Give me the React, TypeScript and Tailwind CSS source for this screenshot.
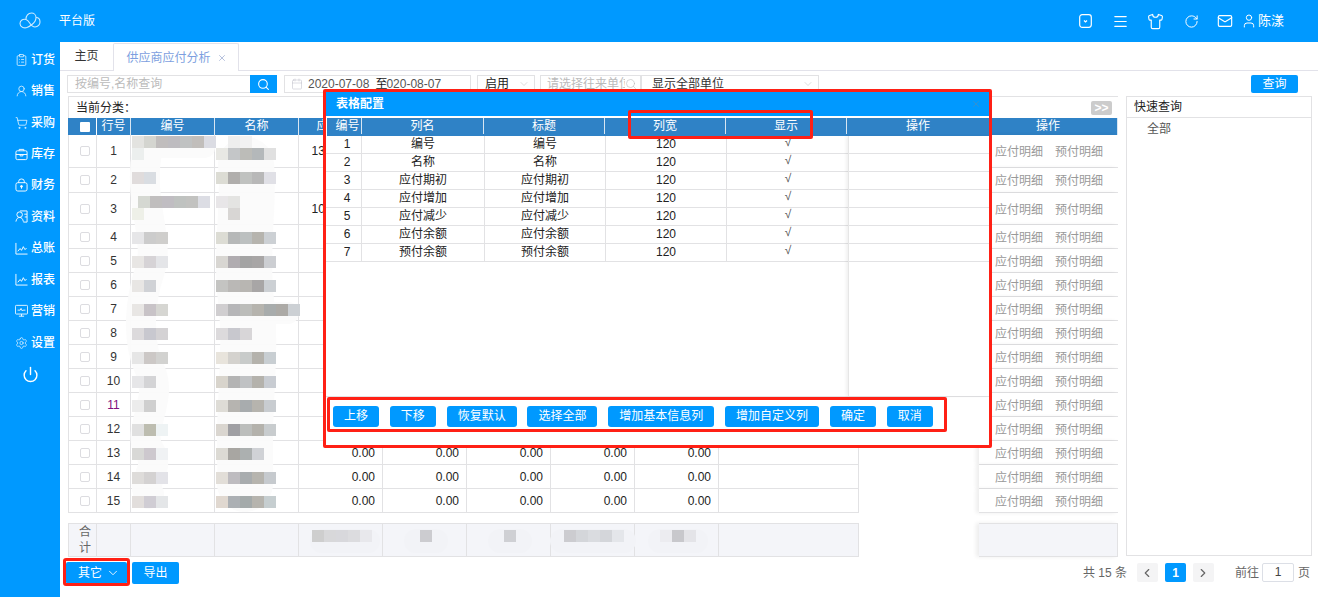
import {
  Calendar,
  ChevronDown,
  ChevronLeft,
  ChevronRight,
  ClipboardList,
  Mail,
  Menu,
  Power,
  RotateCw,
  Search,
  Settings,
  Shirt,
  ShoppingCart,
  User,
  UserRound,
  X,
} from 'lucide-react';

const gridCols = 'grid grid-cols-[29px_34px_84px_84px_84px_84px_84px_84px_84px_140px_120px_139px]';
const line = 'border-[#e2e2e4]';

const ChartIcon = () => (
  <svg width="15" height="15" viewBox="0 0 14 14" fill="none" stroke="currentColor" strokeWidth="1">
    <path d="M1 1v12h12.500" />
    <path d="M3 10l2.500-3 1.500 2 2-4 1.500 3 2-1" />
  </svg>
);

const BoxIcon = () => (
  <svg width="15" height="15" viewBox="0 0 14 14" fill="none" stroke="currentColor" strokeWidth="1">
    <rect x="1" y="3" width="12" height="9.500" rx="1.500" />
    <path d="M4.500 3V1.500h5V3M1 7h12M5.500 7v1.500h3V7" />
  </svg>
);

const BagIcon = () => (
  <svg width="15" height="16" viewBox="0 0 14 15" fill="none" stroke="currentColor" strokeWidth="1">
    <rect x="1" y="5" width="12" height="9" rx="2" />
    <path d="M4 5V3.500a3 2.500 0 0 1 6 0V5" />
    <circle cx="7" cy="9" r="1" fill="currentColor" />
    <path d="M7 9v2.500" />
  </svg>
);

const ContactIcon = () => (
  <svg width="15" height="15" viewBox="0 0 14 14" fill="none" stroke="currentColor" strokeWidth="1">
    <path d="M5.500 1H13v12H9" />
    <circle cx="5" cy="5" r="3" />
    <path d="M1 12.500c.500-3 2-4.500 4-4.500s3.500 1.500 4 4.500M10 4.500h3M10.500 7.500H13" />
  </svg>
);

const MonitorIcon = () => (
  <svg width="16" height="16" viewBox="0 0 15 15" fill="none" stroke="currentColor" strokeWidth="1">
    <rect x="0.500" y="1" width="14" height="10" rx="1" />
    <path d="M3 6.500h3l1-2 1.500 3 1-1h2.500M7.500 11v2.500M4.500 13.500h6" />
  </svg>
);

const LogoIcon = () => (
  <svg width="22" height="18" viewBox="0 0 22 18" fill="none" stroke="currentColor" strokeWidth="1.100" className="opacity-80">
    <path d="M8 15.500c-3 1-7-.500-7-4 0-3 3-5 6-4 2 .700 3 2.500 4 4 1 1.500 2.500 3.500 5 3.500 3 0 5-2.500 5-5 0-3-2-4.500-4-4.500" />
    <path d="M7 7c0-3 2-6 5.500-6C15 1 17 3 17 5.500c0 3-1.500 5-4 7-1.500 1.200-3.500 2.500-5 3" />
  </svg>
);

const SquareDownIcon = () => (
  <svg width="13" height="14" viewBox="0 0 13 14" fill="none" stroke="currentColor" strokeWidth="1.200">
    <rect x="0.700" y="0.700" width="11.600" height="12.600" rx="2.500" />
    <path d="M5 6.500l1.500 1.500L8 6.500" />
  </svg>
);

const navItems = [
  { label: '订货', icon: <ClipboardList size={16} strokeWidth={1.300} /> },
  { label: '销售', icon: <UserRound size={16} strokeWidth={1.300} /> },
  { label: '采购', icon: <ShoppingCart size={16} strokeWidth={1.300} /> },
  { label: '库存', icon: <BoxIcon /> },
  { label: '财务', icon: <BagIcon /> },
  { label: '资料', icon: <ContactIcon /> },
  { label: '总账', icon: <ChartIcon /> },
  { label: '报表', icon: <ChartIcon /> },
  { label: '营销', icon: <MonitorIcon /> },
  { label: '设置', icon: <Settings size={16} strokeWidth={1.200} /> },
];

const rows = [
  { no: 1, h: 'h-[33px]', first: '1345678.00' },
  { no: 2, h: 'h-[25px]' },
  { no: 3, h: 'h-[32px]', first: '1045678.00' },
  { no: 4, h: 'h-[24px]' },
  { no: 5, h: 'h-[24px]' },
  { no: 6, h: 'h-[24px]' },
  { no: 7, h: 'h-[24px]' },
  { no: 8, h: 'h-[24px]' },
  { no: 9, h: 'h-[24px]' },
  { no: 10, h: 'h-[24px]' },
  { no: 11, h: 'h-[24px]' },
  { no: 12, h: 'h-[24px]' },
  { no: 13, h: 'h-[24px]' },
  { no: 14, h: 'h-[24px]' },
  { no: 15, h: 'h-[24px]' },
];

// x, y, colours of the pixelated (redacted) blocks, in page coordinates
const mosaics: [number, number, string[]][] = [
  [132, 136, ['#e3e3e0', '#d4d5d0', '#c0bdbd', '#bebcc0', '#c0c2c2', '#c1bebb', '#dbdce3']],
  [132, 148, ['#ecefee']],
  [228, 136, ['#eeeeee', '#f2f2f2']],
  [216, 148, ['#e8e8e4', '#c4c6c8', '#bcbcb8', '#b4b8ba', '#e0e0e0']],
  [132, 172, ['#e0dcdc', '#d9dde2']],
  [216, 172, ['#dcdcd4', '#b0aeac', '#c0c2c0', '#b8b8b8', '#e0e0e6']],
  [138, 196, ['#d5d8d2', '#c0bebe', '#c0bdc2', '#bfc2c0', '#c2c2c0', '#dcdde4']],
  [132, 208, ['#eef0e8']],
  [216, 196, ['#e8e6e8', '#e4e4e2']],
  [228, 208, ['#d8d6d4']],
  [132, 232, ['#e6e6e8', '#cccccc', '#cfcecc']],
  [216, 232, ['#dcdcd4', '#b6b8b8', '#bcc0c0', '#b6b4ae', '#ccd0d4']],
  [132, 256, ['#e8e6e4', '#d6d3d6', '#e4e5e8']],
  [216, 256, ['#d8d6d2', '#b0acb0', '#a4a4a4', '#a8a6a6', '#ccced2']],
  [132, 280, ['#e8e6e4', '#d0d2d6']],
  [216, 280, ['#c4c4c2', '#bab8b6', '#b8b6b2', '#a8a6a6', '#ccd0d4']],
  [132, 304, ['#e8e6e4', '#c8c3c7', '#d6d6d2']],
  [216, 304, ['#d0ced0', '#b6b6b8', '#bcbdba', '#b6b4ae', '#a8acac', '#acaaa6', '#ccd0d4']],
  [132, 328, ['#dcdadc', '#c8c8cf', '#d4d2d4']],
  [216, 328, ['#dcdadc', '#c8c8ce', '#d8d6d8']],
  [132, 352, ['#e6e6e6', '#ccc8c6', '#d2d2d0']],
  [216, 352, ['#e8e4dc', '#d4d2ce', '#c8cbca', '#b4b2ac', '#c8ced2']],
  [132, 376, ['#e6e6e8', '#d4d4d6']],
  [216, 376, ['#d8d4cc', '#b4b4b4', '#c0c2c4', '#b4b2ac', '#c8ccd2']],
  [132, 400, ['#ececec', '#cfcfcf']],
  [216, 400, ['#dedcd6', '#b6b4b0', '#a8acae', '#b6b4ae', '#c8ccd0']],
  [132, 424, ['#e0e0e0', '#bdbdb0', '#eef3f4']],
  [216, 424, ['#dad6d0', '#a0a0a4', '#bcbebc', '#b4b2ac', '#c8ccce']],
  [132, 448, ['#d8d8d6', '#cdc8ce', '#f0f2f4']],
  [216, 448, ['#dcdad4', '#a8a6a2', '#acb0b0', '#d0d2d6']],
  [132, 472, ['#dedcda', '#d4d2d2', '#e3e3e8']],
  [216, 472, ['#e2ded8', '#bebcc0', '#a8acae', '#b6b4ae', '#c6cace']],
  [132, 496, ['#e2dedc', '#d0cdd4', '#e4e6e8']],
  [216, 496, ['#e0d8d0', '#acb0b4', '#a4aaaa', '#b6b4ae', '#c6ced0']],
  [312, 530, ['#cecece', '#d8d8da', '#d8d8dc', '#dcdcdf', '#e8e8ec']],
  [420, 530, ['#ccccd0']],
  [504, 530, ['#cfd0d4']],
  [564, 530, ['#ccccd0', '#d4d6da', '#dadce0', '#d4d6da', '#e4e6ea']],
  [660, 530, ['#ececf0', '#c8c8cc', '#e4e4e8']],
];

const Redaction = () => (
  <svg className="absolute left-0 top-0 pointer-events-none" width="1050" height="460" viewBox="68 96 1050 460">
    <g fill="none" stroke="#fbfbfb" strokeLinecap="round" opacity="0.96">
      <path strokeWidth="30" d="M147 152C138 200 160 240 150 270S136 340 150 370S136 430 149 450S140 480 149 494" />
      <path strokeWidth="56" d="M246 165C250 200 240 250 246 300S244 400 245 450S244 475 245 484" />
      <path strokeWidth="22" d="M240 313L288 313" />
      <path strokeWidth="20" d="M145 148L205 148" />
    </g>
    <g fill="none" stroke="#f2f3f7" strokeLinecap="round" strokeWidth="24">
      <path d="M322 541L368 541" />
      <path d="M416 541L436 541" />
      <path d="M500 541L520 541" />
      <path d="M562 541L624 541" />
      <path d="M660 541L696 541" />
    </g>
    {mosaics.map(([x, y, colours]) =>
      colours.map((colour, i) => (
        <rect key={`${x}-${y}-${i}`} x={x + i * 12} y={y} width="12" height="12" fill={colour} />
      )),
    )}
  </svg>
);

const headers = ['行号', '编号', '名称', '应付期初', '应付增加', '应付减少', '应付余额', '预付余额', '', '', '操作'];

const MainTable = () => (
  <div className={`relative w-[1050px] h-[460px] flex flex-col text-[12px] text-[#333]`}>
    <div className={`h-[22px] border-l border-t ${line} flex items-center justify-between pl-[7px] pr-[6px]`}>
      <span className="text-[#222]">当前分类：</span>
      <span className="w-[21px] h-[14px] bg-[#cccccc] rounded-[2px] text-white font-bold text-[12px] leading-[14px] text-center">&gt;&gt;</span>
    </div>
    <div className={`${gridCols} h-[17px] bg-[#2f82c6] text-white leading-[17px] text-center`}>
      <div className="border-r border-white flex items-center justify-center">
        <span className="w-[10px] h-[10px] bg-white rounded-[1px] ml-[6px]" />
      </div>
      {headers.map((h, i) => (
        <div key={i} className={i === 8 || i === 9 ? '' : 'border-r border-[#d8e6f2]'}>{h}</div>
      ))}
    </div>
    {rows.map((row) => (
      <div key={row.no} className={`${gridCols} ${row.h}`}>
        <div className={`border-l border-r border-b ${line} flex items-center justify-center`}>
          <span className="w-[10px] h-[10px] border border-[#dcdce0] rounded-[2px] ml-[5px]" />
        </div>
        <div className={`border-r border-b ${line} flex items-center justify-center ${row.no === 11 ? 'text-[#800f80]' : ''}`}>{row.no}</div>
        <div className={`border-r border-b ${line}`} />
        <div className={`border-r border-b ${line}`} />
        {[0, 1, 2, 3, 4].map((c) => (
          <div key={c} className={`border-r border-b ${line} flex items-center justify-end pr-[7px] text-[#222]`}>
            {row.first && c === 0 ? row.first : row.no > 3 || c > 0 ? '0.00' : ''}
          </div>
        ))}
        <div className={`border-r border-b ${line}`} />
        <div />
        <div className={`border-b ${line} flex items-center gap-[12px] pl-[16px] pt-[2px] text-[#999] bg-white shadow-[-3px_0_4px_rgba(0,0,0,0.07)]`}>
          <span>应付明细</span>
          <span>预付明细</span>
        </div>
      </div>
    ))}
    <div className="h-[10px]" />
    <div className={`${gridCols} h-[33px] text-[#666]`}>
      <div className={`border-l border-r border-t border-b ${line} bg-[#f4f5f9] flex items-center justify-center leading-[16px] text-center`}>
        <span className="w-[12px] ml-[5px]">合计</span>
      </div>
      {[0, 1, 2, 3, 4, 5, 6, 7, 8].map((c) => (
        <div key={c} className={`border-r border-t border-b ${line} bg-[#f4f5f9]`} />
      ))}
      <div />
      <div className={`border-t border-b border-r ${line} bg-[#f4f5f9] shadow-[-3px_0_4px_rgba(0,0,0,0.07)]`} />
    </div>
    <Redaction />
  </div>
);

const configRows = [
  ['1', '编号', '120'],
  ['2', '名称', '120'],
  ['3', '应付期初', '120'],
  ['4', '应付增加', '120'],
  ['5', '应付减少', '120'],
  ['6', '应付余额', '120'],
  ['7', '预付余额', '120'],
];

const modalButtons = ['上移', '下移', '恢复默认', '选择全部', '增加基本信息列', '增加自定义列', '确定', '取消'];

const ConfigModal = () => (
  <div className="absolute left-[326px] top-[92px] w-[663px] h-[353px] bg-white flex flex-col text-[12px] text-[#222]">
    <div className="h-[24px] bg-[#0099ff] flex items-center justify-between pl-[10px] pr-[8px] text-white font-bold">
      <span>表格配置</span>
      <X size={10} className="text-[#3d8fc9]" strokeWidth={2} />
    </div>
    <div className="mt-[2px] ml-[1px] h-[18px] border-b-2 border-[#2f82c6] bg-white">
      <div className="h-[16px] bg-[#2f82c6] text-white leading-[16px] text-center grid grid-cols-[35px_122px_121px_121px_121px_1fr]">
        {['编号', '列名', '标题', '列宽', '显示', '操作'].map((h, i) => (
          <div key={h} className={`${i === 0 ? 'pl-[7px] whitespace-nowrap' : ''} ${i < 5 ? 'border-r border-[#d8e6f2]' : ''}`}>{h}</div>
        ))}
      </div>
    </div>
    <div className="relative h-[261px] border-b border-[#e2e2e4]">
      {configRows.map(([no, name, width]) => (
        <div key={no} className={`grid grid-cols-[36px_123px_121px_121px_122px_1fr] h-[18px] border-b ${line} text-center leading-[17px]`}>
          <div className={`border-r ${line} pl-[7px]`}>{no}</div>
          <div className={`border-r ${line}`}>{name}</div>
          <div className={`border-r ${line}`}>{name}</div>
          <div className={`border-r ${line}`}>{width}</div>
          <div className="text-[#555] leading-[13px]">√</div>
          <div />
        </div>
      ))}
      <div className="absolute left-[522px] top-0 bottom-0 right-0 border-l border-[#e6e6e6] shadow-[-2px_0_3px_rgba(0,0,0,0.06)] pointer-events-none" />
    </div>
    <div className="flex gap-[10.800px] pl-[7px] mt-[9px]">
      {modalButtons.map((b) => (
        <button key={b} className="h-[21px] px-[11px] bg-[#0099ff] text-white rounded-[3px] leading-[21px]">{b}</button>
      ))}
    </div>
  </div>
);

const App = () => {
  return (
    <div className="relative w-[1318px] h-[597px] overflow-hidden bg-white flex flex-col font-['Liberation_Sans','Noto_Sans_CJK_SC',sans-serif] text-[12px]">
      <header className="h-[42px] shrink-0 bg-[#0099ff] text-white flex items-center">
        <div className="w-[59px] pl-[19px]">
          <LogoIcon />
        </div>
        <span>平台版</span>
        <div className="ml-auto flex items-center pr-[34px]">
          <SquareDownIcon />
          <Menu size={17} strokeWidth={1.700} className="ml-[20px]" />
          <Shirt size={17} strokeWidth={1.600} className="ml-[18px]" />
          <RotateCw size={15} strokeWidth={1.600} className="ml-[20px]" />
          <Mail size={16} strokeWidth={1.700} className="ml-[18px]" />
          <User size={16} strokeWidth={1.500} className="ml-[8px]" />
          <span className="ml-[1px] -mt-[1px] text-[13px]">陈漾</span>
        </div>
      </header>

      <div className="flex flex-1">
        <aside className="w-[60px] shrink-0 bg-[#0099ff] text-white flex flex-col pt-[2px]">
          {navItems.map((item) => (
            <div key={item.label} className="h-[31.450px] flex items-center pl-[15px] gap-[4px] font-medium">
              <span className="w-[13px] flex justify-center">{item.icon}</span>
              <span className="ml-[-1px]">{item.label}</span>
            </div>
          ))}
          <div className="flex justify-center pt-[8px]">
            <Power size={17} strokeWidth={2} />
          </div>
        </aside>

        <main className="flex-1 flex flex-col min-w-0">
          <div className="h-[29px] border-b border-[#e2e2ea] flex items-end">
            <div className="w-[53px] h-[28px] pb-[1px] flex items-center justify-center text-[#333]">主页</div>
            <div className="w-[126px] h-[28px] -mb-[1px] bg-white border-l border-r border-t border-[#e2e2ea] rounded-t-[2px] flex items-center justify-center gap-[6px] pl-[1px] text-[#7d9fe0]">
              <span>供应商应付分析</span>
              <X size={10} strokeWidth={1.500} className="text-[#8a9bc8]" />
            </div>
          </div>

          <div className="h-[18px] mt-[4px] pl-[7px] pr-[20px] flex items-stretch">
            <div className={`w-[183px] border ${line} border-r-0 pl-[7px] text-[#bbbbbb] leading-[16px]`}>按编号,名称查询</div>
            <div className="w-[27px] bg-[#0099ff] text-white flex items-center justify-center">
              <Search size={13} strokeWidth={2} />
            </div>
            <div className={`w-[187px] ml-[7px] border ${line} flex items-center pl-[6px] text-[#555]`}>
              <Calendar size={12} strokeWidth={1} className="text-[#b8b8c4]" />
              <span className="ml-[5px]">2020-07-08</span>
              <span className="ml-[6px] text-[#222]">至</span>
              <span className="-ml-[1px]">020-08-07</span>
            </div>
            <div className={`w-[58px] ml-[6px] border ${line} flex items-center justify-between pl-[7px] pr-[4px] text-[#222]`}>
              <span>启用</span>
              <ChevronDown size={12} strokeWidth={1} className="text-[#bbb]" />
            </div>
            <div className={`w-[101px] ml-[5px] border ${line} flex items-center pl-[6px] text-[#bbbbbb] overflow-hidden whitespace-nowrap`}>
              <span className="w-[78px] overflow-hidden">请选择往来单位</span>
              <Search size={12} strokeWidth={1.200} className="text-[#bbb] shrink-0" />
            </div>
            <div className={`w-[178px] border ${line} flex items-center justify-between pl-[10px] pr-[4px] text-[#333]`}>
              <span>显示全部单位</span>
              <ChevronDown size={12} strokeWidth={1} className="text-[#bbb]" />
            </div>
            <button className="ml-auto w-[47px] bg-[#0099ff] text-white rounded-[2px] leading-[18px]">查询</button>
          </div>

          <div className="flex mt-[3px] pl-[8px] gap-[8px]">
            <MainTable />
            <div className={`w-[186px] h-[460px] border ${line}`}>
              <div className={`h-[21px] border-b ${line} pl-[7px] leading-[20px] text-[#222]`}>快速查询</div>
              <div className="pl-[20px] pt-[1px] leading-[20px] text-[#555]">全部</div>
            </div>
          </div>

          <div className="flex items-center mt-[6px] pl-[6px] pr-[8px] h-[21px]">
            <button className="w-[61px] h-[22px] bg-[#0099ff] text-white rounded-[2px] flex items-center pl-[12px] gap-[4px]">
              其它
              <ChevronDown size={14} strokeWidth={1.500} />
            </button>
            <button className="w-[47px] h-[22px] ml-[5px] bg-[#0099ff] text-white rounded-[2px]">导出</button>
            <span className="ml-auto text-[#666]">共 15 条</span>
            <span className="w-[21px] h-[19px] ml-[10px] bg-[#f4f4f5] text-[#666] flex items-center justify-center rounded-[2px]"><ChevronLeft size={14} /></span>
            <span className="w-[21px] h-[19px] ml-[7px] bg-[#0099ff] text-white font-bold flex items-center justify-center rounded-[2px]">1</span>
            <span className="w-[21px] h-[19px] ml-[7px] bg-[#f4f4f5] text-[#666] flex items-center justify-center rounded-[2px]"><ChevronRight size={14} /></span>
            <span className="ml-[21px] text-[#666]">前往</span>
            <span className="w-[32px] h-[19px] ml-[3px] border border-[#dcdfe6] rounded-[2px] text-center leading-[17px] text-[#444]">1</span>
            <span className="ml-[4px] text-[#666]">页</span>
          </div>
        </main>
      </div>

      <ConfigModal />
      <div className="absolute left-[323px] top-[89px] w-[669px] h-[359px] border-[3px] border-[#ff2015] rounded-[2px] pointer-events-none" />
      <div className="absolute left-[628px] top-[110px] w-[185px] h-[29px] border-[3px] border-[#ff2015] rounded-[2px] pointer-events-none" />
      <div className="absolute left-[327px] top-[397px] w-[620px] h-[35px] border-[3px] border-[#ff2015] rounded-[2px] pointer-events-none" />
      <div className="absolute left-[63px] top-[558px] w-[67px] h-[28px] border-[3px] border-[#ff2015] rounded-[3px] pointer-events-none" />
    </div>
  );
};

export default App;
